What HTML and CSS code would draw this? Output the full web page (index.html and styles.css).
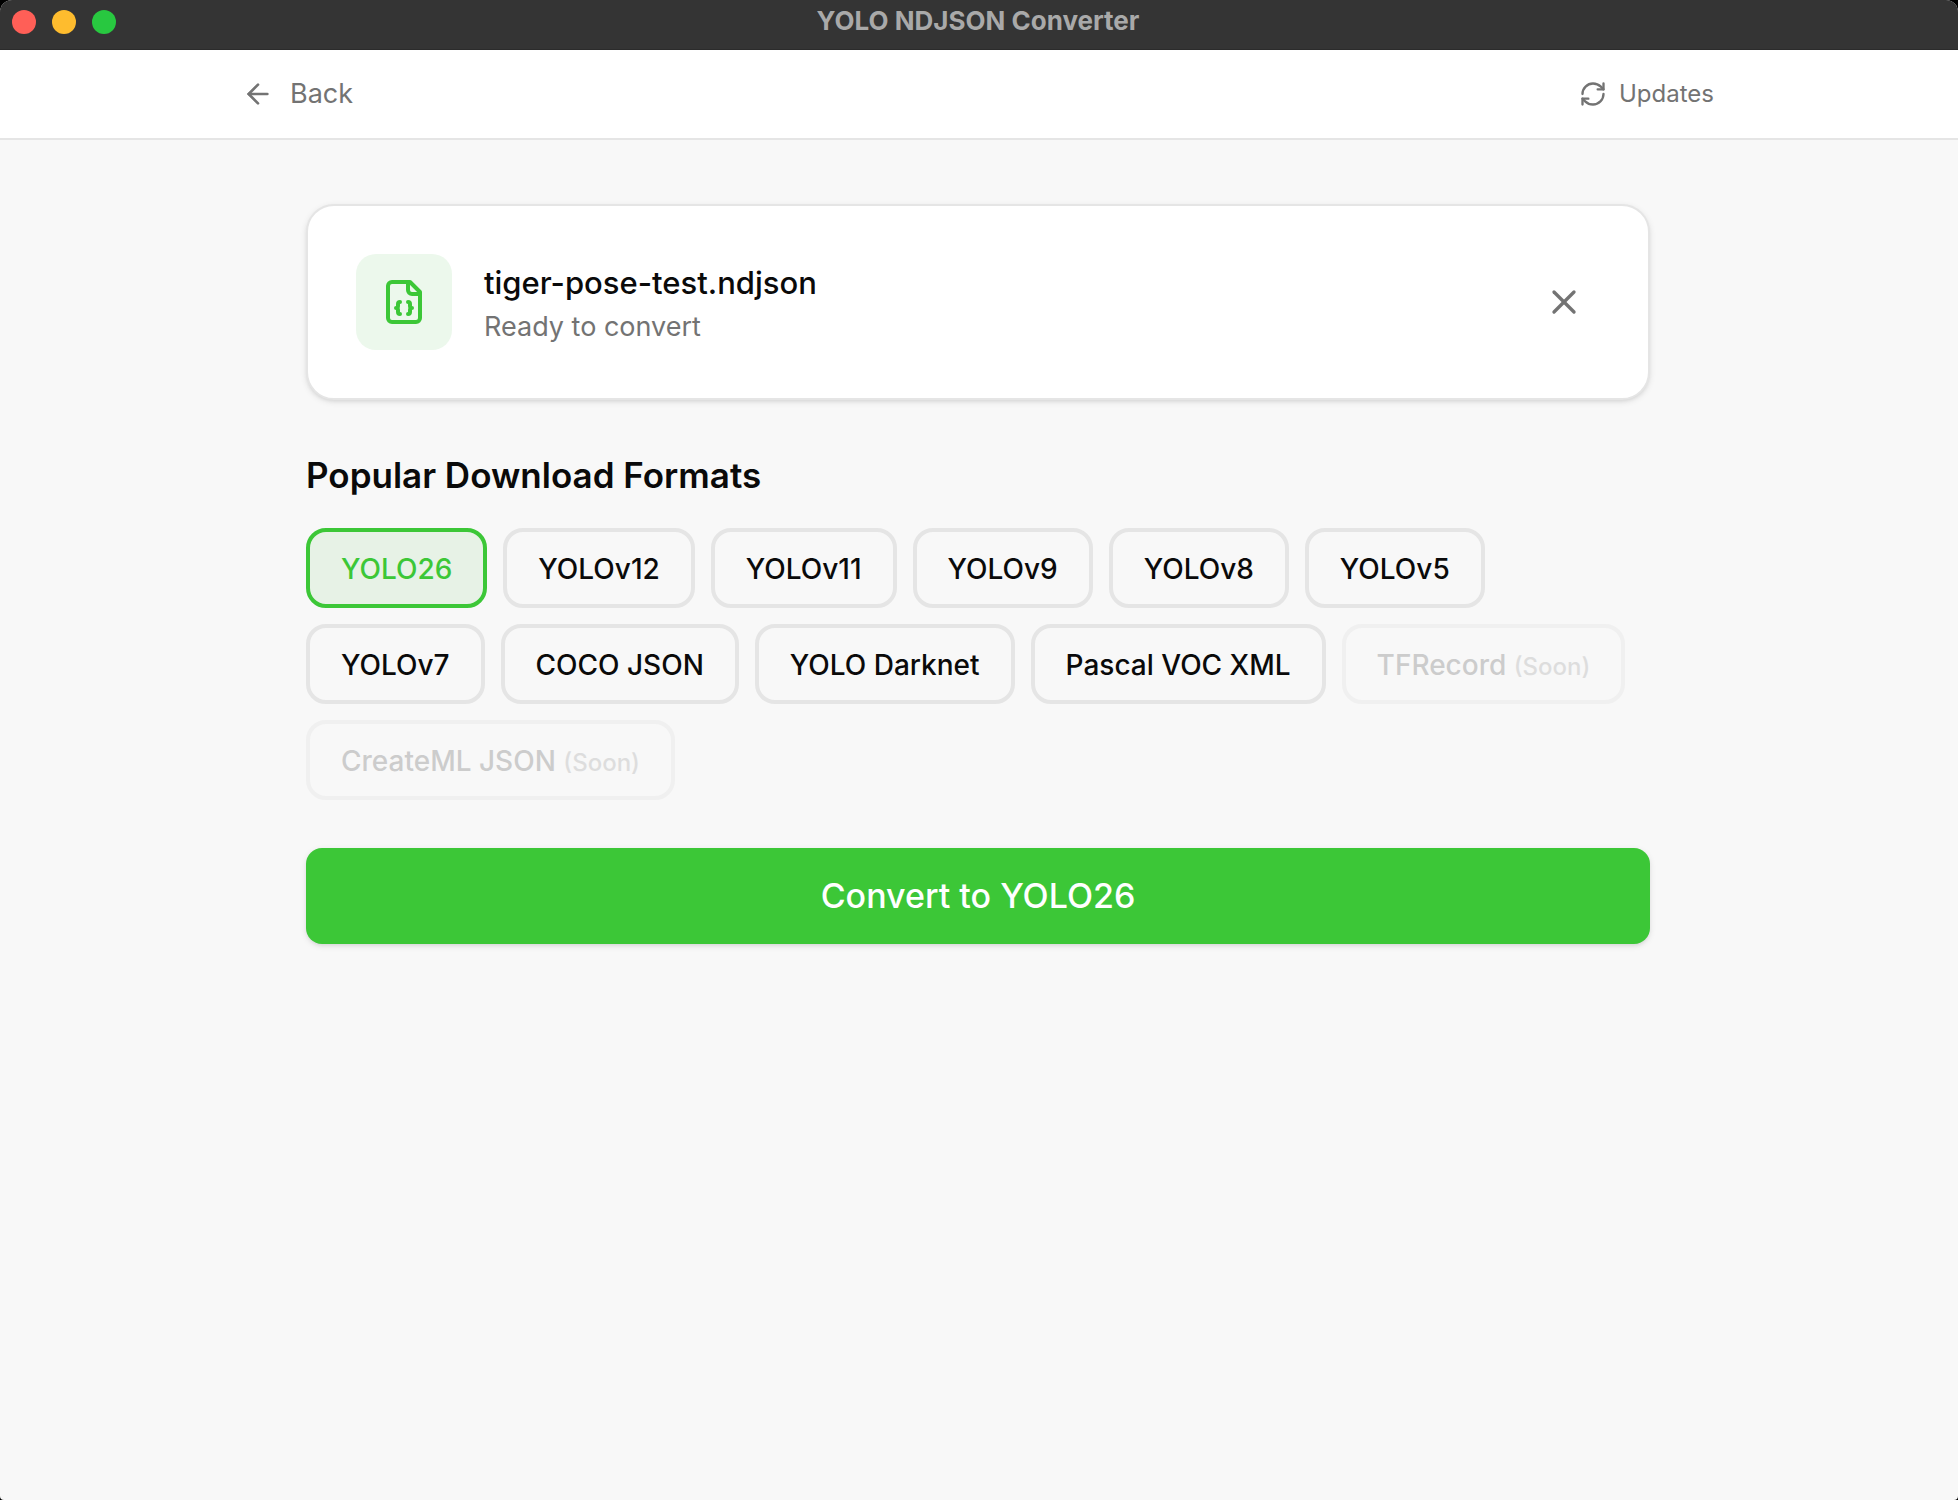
FILE: index.html
```html
<!DOCTYPE html>
<html lang="en">
<head>
  <meta charset="utf-8">
  <meta name="viewport" content="width=device-width, initial-scale=1">
  <title>YOLO NDJSON Converter</title>
  <link rel="stylesheet" href="styles.css">
</head>
<body>
  <div class="window">
    <div class="titlebar">
      <div class="lights">
        <button class="light light-close" type="button" aria-label="Close window"></button>
        <button class="light light-minimize" type="button" aria-label="Minimize window"></button>
        <button class="light light-zoom" type="button" aria-label="Zoom window"></button>
      </div>
      <p class="window-title">YOLO NDJSON Converter</p>
    </div>

    <header class="toolbar">
      <div class="toolbar-inner">
        <button class="link-button back" type="button">
          <svg class="icon-back" viewBox="0 0 24 24" aria-hidden="true"><path d="m12 19-7-7 7-7"/><path d="M19 12H5"/></svg>
          Back
        </button>
        <button class="link-button updates" type="button">
          <svg class="icon-updates" viewBox="0 0 24 24" aria-hidden="true"><path d="M3 12a9 9 0 0 1 9-9 9.75 9.75 0 0 1 6.740 2.740L21 8"/><path d="M21 3v5h-5"/><path d="M21 12a9 9 0 0 1-9 9 9.750 9.750 0 0 1-6.740-2.740L3 16"/><path d="M8 16H3v5"/></svg>
          Updates
        </button>
      </div>
    </header>

    <main class="content">
      <section class="file-card">
        <div class="file-badge">
          <svg class="icon-file" viewBox="0 0 24 24" aria-hidden="true"><path d="M15 2H6a2 2 0 0 0-2 2v16a2 2 0 0 0 2 2h12a2 2 0 0 0 2-2V7Z"/><path d="M14 2v4a2 2 0 0 0 2 2h4"/><path d="M10 12a1 1 0 0 0-1 1v1a1 1 0 0 1-1 1 1 1 0 0 1 1 1v1a1 1 0 0 0 1 1"/><path d="M14 18a1 1 0 0 0 1-1v-1a1 1 0 0 1 1-1 1 1 0 0 1-1-1v-1a1 1 0 0 0-1-1"/></svg>
        </div>
        <div class="file-info">
          <p class="file-name">tiger-pose-test.ndjson</p>
          <p class="file-status">Ready to convert</p>
        </div>
        <button class="remove" type="button" aria-label="Remove file">
          <svg class="icon-remove" viewBox="0 0 24 24" aria-hidden="true"><path d="M18 6 6 18"/><path d="m6 6 12 12"/></svg>
        </button>
      </section>

      <section class="formats">
        <h2 class="formats-title">Popular Download Formats</h2>
        <div class="format-list">
          <button class="format format-selected" type="button" aria-pressed="true">YOLO26</button>
          <button class="format" type="button">YOLOv12</button>
          <button class="format" type="button">YOLOv11</button>
          <button class="format" type="button">YOLOv9</button>
          <button class="format" type="button">YOLOv8</button>
          <button class="format" type="button">YOLOv5</button>
          <button class="format" type="button">YOLOv7</button>
          <button class="format" type="button">COCO JSON</button>
          <button class="format" type="button">YOLO Darknet</button>
          <button class="format" type="button">Pascal VOC XML</button>
          <button class="format" type="button" disabled>TFRecord <span class="soon">(Soon)</span></button>
          <button class="format" type="button" disabled>CreateML JSON <span class="soon">(Soon)</span></button>
        </div>
      </section>

      <button class="convert" type="button">Convert to YOLO26</button>
    </main>
  </div>
</body>
</html>
```
FILE: styles.css
```css
:root {
  --green: #3cc737;
  --text: #0a0a0a;
  --muted: #737373;
  --line: #e5e5e5;
  --page: #f8f8f8;
}

*,
*::before,
*::after {
  box-sizing: border-box;
}

body {
  margin: 0;
  background: #000;
  color: var(--text);
  font-family: Inter, "Liberation Sans", sans-serif;
  -webkit-font-smoothing: antialiased;
}

p,
h2 {
  margin: 0;
}

button {
  margin: 0;
  padding: 0;
  border: 0;
  background: none;
  color: inherit;
  font: inherit;
  cursor: pointer;
}

svg {
  display: block;
  fill: none;
  stroke: currentColor;
  stroke-width: 2;
  stroke-linecap: round;
  stroke-linejoin: round;
}

.window {
  min-height: 100vh;
  border-radius: 12px 12px 4px 4px;
  overflow: hidden;
  background: var(--page);
}

/* Title bar */
.titlebar {
  display: grid;
  grid-template-columns: 1fr auto 1fr;
  align-items: start;
  height: 50px;
  padding: 0 14px 0 12px;
  background: #343434;
  border-bottom: 1px solid #2b2b2b;
}

.lights {
  display: flex;
  gap: 16px;
  padding-top: 10px;
}

.light {
  width: 24px;
  height: 24px;
  border-radius: 50%;
}

.light-close {
  background: #ff5f57;
}

.light-minimize {
  background: #febc2e;
}

.light-zoom {
  background: #28c840;
}

.window-title {
  color: #a9a9a9;
  font-size: 26px;
  font-weight: 700;
  line-height: 42px;
}

/* Toolbar */
.toolbar {
  background: #fff;
  border-bottom: 2px solid var(--line);
}

.toolbar-inner {
  display: flex;
  align-items: center;
  justify-content: space-between;
  max-width: 1538px;
  height: 88px;
  margin: 0 auto;
  padding: 0 34px 0 32px;
}

.link-button {
  display: flex;
  align-items: center;
  color: var(--muted);
}

.back {
  gap: 16px;
  font-size: 27px;
  line-height: 40px;
}

.updates {
  gap: 12px;
  font-size: 24px;
  line-height: 32px;
}

.icon-back {
  width: 32px;
  height: 32px;
}

.icon-updates {
  width: 28px;
  height: 28px;
}

/* Content */
.content {
  display: flex;
  flex-direction: column;
  gap: 48px;
  max-width: 1410px;
  margin: 0 auto;
  padding: 64px 34px 64px 32px;
}

.file-card {
  display: flex;
  align-items: center;
  gap: 32px;
  padding: 48px;
  border: 2px solid var(--line);
  border-radius: 28px;
  background: #fff;
  box-shadow: 0 2px 6px rgba(0, 0, 0, 0.1), 0 2px 4px -2px rgba(0, 0, 0, 0.1);
}

.file-badge {
  display: grid;
  place-items: center;
  width: 96px;
  height: 96px;
  border-radius: 20px;
  background: #ecf8ec;
  color: var(--green);
}

.icon-file {
  width: 48px;
  height: 48px;
}

.file-info {
  flex: 1;
  min-width: 0;
  padding-top: 2px;
}

.file-name {
  font-size: 31px;
  font-weight: 500;
  line-height: 48px;
}

.file-status {
  color: var(--muted);
  font-size: 27px;
  line-height: 40px;
}

.remove {
  padding: 16px;
  color: var(--muted);
}

.icon-remove {
  width: 40px;
  height: 40px;
}

/* Formats */
.formats-title {
  margin-bottom: 26px;
  font-size: 35px;
  font-weight: 600;
  line-height: 54px;
}

.format-list {
  display: flex;
  flex-wrap: wrap;
  gap: 16px;
}

.format {
  height: 80px;
  padding: 1px 31px 0;
  border: 4px solid var(--line);
  border-radius: 20px;
  font-size: 28px;
  font-weight: 500;
  line-height: 40px;
}

.format-selected {
  border-color: var(--green);
  background: #e7f2e6;
  color: var(--green);
}

.format:disabled {
  opacity: 0.4;
  color: #8c8c8c;
  cursor: not-allowed;
}

.soon {
  font-size: 24px;
  line-height: 24px;
  opacity: 0.6;
}

.convert {
  height: 96px;
  border-radius: 16px;
  background: var(--green);
  box-shadow: 0 2px 6px rgba(0, 0, 0, 0.1), 0 2px 4px -2px rgba(0, 0, 0, 0.1);
  color: #fff;
  font-size: 34px;
  font-weight: 500;
  line-height: 56px;
}
```
